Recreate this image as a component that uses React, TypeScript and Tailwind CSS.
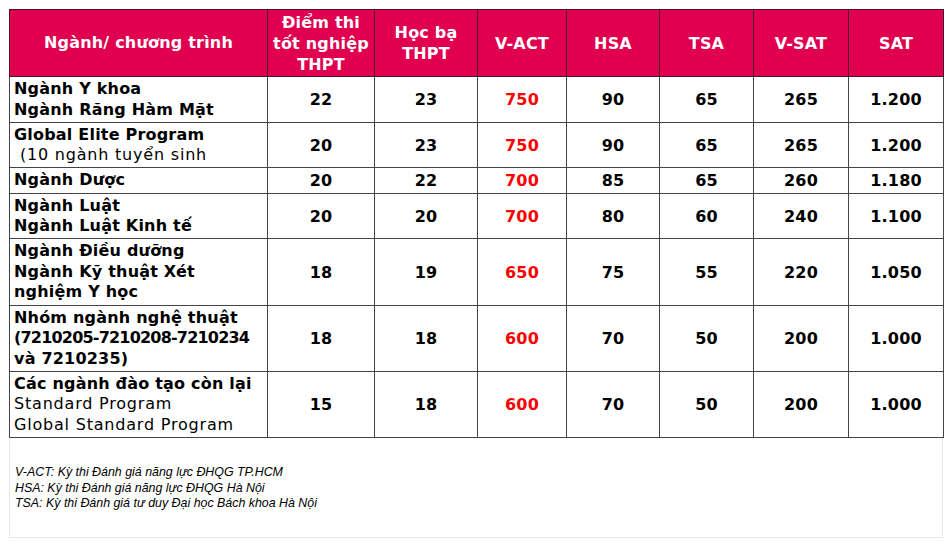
import React from 'react'

type Row = {
    name: React.ReactNode
    h: string
    vals: string[]
}

const rows: Row[] = [
    {
        name: (
            <>
                <div className="font-bold">Ngành Y khoa</div>
                <div className="font-bold">Ngành Răng Hàm Mặt</div>
            </>
        ),
        h: 'h-[46px]',
        vals: ['22', '23', '750', '90', '65', '265', '1.200'],
    },
    {
        name: (
            <>
                <div className="font-bold">Global Elite Program</div>
                <div className="whitespace-pre tracking-[0.8px]"> (10 ngành tuyển sinh</div>
            </>
        ),
        h: 'h-[45px]',
        vals: ['20', '23', '750', '90', '65', '265', '1.200'],
    },
    {
        name: <div className="font-bold">Ngành Dược</div>,
        h: 'h-[26px]',
        vals: ['20', '22', '700', '85', '65', '260', '1.180'],
    },
    {
        name: (
            <>
                <div className="font-bold">Ngành Luật</div>
                <div className="font-bold">Ngành Luật Kinh tế</div>
            </>
        ),
        h: 'h-[45px]',
        vals: ['20', '20', '700', '80', '60', '240', '1.100'],
    },
    {
        name: (
            <>
                <div className="font-bold">Ngành Điều dưỡng</div>
                <div className="font-bold">Ngành Kỹ thuật Xét</div>
                <div className="font-bold">nghiệm Y học</div>
            </>
        ),
        h: 'h-[67px]',
        vals: ['18', '19', '650', '75', '55', '220', '1.050'],
    },
    {
        name: (
            <>
                <div className="font-bold">Nhóm ngành nghệ thuật</div>
                <div className="font-bold whitespace-nowrap tracking-[-0.8px]">(7210205-7210208-7210234</div>
                <div className="font-bold">và 7210235)</div>
            </>
        ),
        h: 'h-[66px]',
        vals: ['18', '18', '600', '70', '50', '200', '1.000'],
    },
    {
        name: (
            <>
                <div className="font-bold">Các ngành đào tạo còn lại</div>
                <div className="tracking-[0.8px]">Standard Program</div>
                <div className="tracking-[0.8px]">Global Standard Program</div>
            </>
        ),
        h: 'h-[66px]',
        vals: ['15', '18', '600', '70', '50', '200', '1.000'],
    },
]

const headers = ['Điểm thi tốt nghiệp THPT', 'Học bạ THPT', 'V-ACT', 'HSA', 'TSA', 'V-SAT', 'SAT']

export default function App() {
    return (
        <div className="w-[948px] h-[544px] bg-white pt-[9px] pl-[9px]">
            <div className="w-[934px]">
                <table
                    className="w-[934px] table-fixed border-collapse text-[16px] leading-[20.5px] tracking-[0.2px] text-black"
                    style={{ fontFamily: '"DejaVu Sans", sans-serif' }}
                >
                    <colgroup>
                        <col className="w-[258px]" />
                        <col className="w-[107px]" />
                        <col className="w-[103px]" />
                        <col className="w-[89px]" />
                        <col className="w-[93px]" />
                        <col className="w-[94px]" />
                        <col className="w-[95px]" />
                        <col className="w-[95px]" />
                    </colgroup>
                    <thead>
                        <tr className="h-[67px] bg-[#e0004f] text-white">
                            <th className="border border-[#4a1626] px-1 text-center font-bold">Ngành/ chương trình</th>
                            {headers.map((h) => (
                                <th key={h} className="border border-[#4a1626] px-1 text-center font-bold leading-[21px]">
                                    {h}
                                </th>
                            ))}
                        </tr>
                    </thead>
                    <tbody>
                        {rows.map((r, i) => (
                            <tr key={i} className={r.h}>
                                <td className="border border-[#444] px-1 align-middle">{r.name}</td>
                                {r.vals.map((v, j) => (
                                    <td
                                        key={j}
                                        className={`border border-[#444] pt-[2px] text-center align-middle font-bold ${j === 2 ? 'text-[#ff0000]' : ''}`}
                                    >
                                        {v}
                                    </td>
                                ))}
                            </tr>
                        ))}
                    </tbody>
                </table>
                <div
                    className="h-[100px] border border-t-0 border-[#e6e6e6] pl-[5px] pt-[27px] text-[12.4px] leading-[15.5px] italic text-black"
                    style={{ fontFamily: '"Liberation Sans", Arial, sans-serif' }}
                >
                    <div>V-ACT: Kỳ thi Đánh giá năng lực ĐHQG TP.HCM</div>
                    <div>HSA: Kỳ thi Đánh giá năng lực ĐHQG Hà Nội</div>
                    <div>TSA: Kỳ thi Đánh giá tư duy Đại học Bách khoa Hà Nội</div>
                </div>
            </div>
        </div>
    )
}
